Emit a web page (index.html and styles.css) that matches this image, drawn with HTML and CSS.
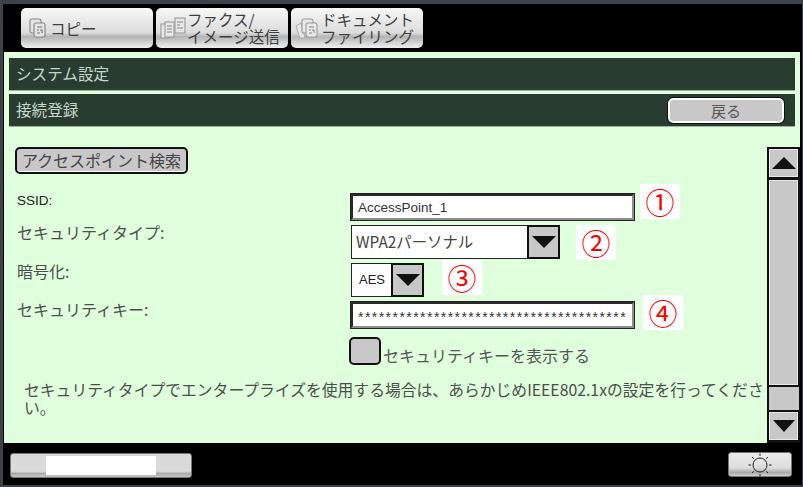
FILE: index.html
```html
<!DOCTYPE html>
<html lang="ja">
<head>
<meta charset="utf-8">
<title>接続登録</title>
<link rel="stylesheet" href="styles.css">
</head>
<body>
<div class="frame">
  <nav class="tabs">
    <div class="tab tab-copy">
      <svg class="tab-icon" viewBox="0 0 20 20"><g fill="#e4e4e4" stroke="#8a8a8a" stroke-width="1.2"><rect x="2" y="1" width="11" height="14" rx="2"/><rect x="6" y="5" width="11" height="14" rx="2"/></g><path d="M9 9h5M9 12h2M12 12h2v3M9 15h3" fill="none" stroke="#777" stroke-width="1.2"/></svg>
      <span class="tab-text">コピー</span>
    </div>
    <div class="tab tab-fax">
      <svg class="tab-icon wide" viewBox="0 0 26 22"><g fill="#e8e8e8" stroke="#999" stroke-width="1.1"><rect x="1" y="7" width="8" height="14"/><rect x="5" y="5" width="9" height="15"/><rect x="15" y="1" width="10" height="15"/></g><path d="M7 9h5M7 12h5M7 15h5M17 5h6M17 8h3M17 11h6" stroke="#888" fill="none"/></svg>
      <span class="tab-text two">ファクス/<br>イメージ送信</span>
    </div>
    <div class="tab">
      <svg class="tab-icon wide" viewBox="0 0 26 22"><path d="M1 9l5-3 4 15-5 0z" fill="#e8e8e8" stroke="#aaa"/><g fill="#e8e8e8" stroke="#999" stroke-width="1.1"><rect x="7" y="2" width="11" height="14" rx="2"/><rect x="11" y="6" width="11" height="14" rx="2"/></g><path d="M14 10h5M14 13h2M17 13h2v3M14 16h3" fill="none" stroke="#888"/></svg>
      <span class="tab-text two">ドキュメント<br>ファイリング</span>
    </div>
  </nav>
  <main class="panel">
    <header class="bars">
      <div class="bar"><span class="bar-title">システム設定</span></div>
      <div class="bar bar-sub"><span class="bar-title">接続登録</span><button class="back">戻る</button></div>
    </header>
    <div class="body">
      <section class="content">
        <button class="search">アクセスポイント検索</button>
        <div class="row row-ssid">
          <label class="label label-latin">SSID:</label>
          <div class="input"><span>AccessPoint_1</span></div>
          <span class="note note-1">①</span>
        </div>
        <div class="row row-type">
          <label class="label">セキュリティタイプ:</label>
          <div class="select select-type"><span class="value">WPA2パーソナル</span><span class="drop"><i class="arrow-down"></i></span></div>
          <span class="note note-2">②</span>
        </div>
        <div class="row row-enc">
          <label class="label">暗号化:</label>
          <div class="select select-enc"><span class="value value-small">AES</span><span class="drop"><i class="arrow-down"></i></span></div>
          <span class="note note-3">③</span>
        </div>
        <div class="row row-key">
          <label class="label">セキュリティキー:</label>
          <div class="input"><span class="stars">***************************************</span></div>
          <span class="note note-4">④</span>
        </div>
        <div class="row row-check">
          <span class="label"></span>
          <span class="checkbox"></span><span class="check-text">セキュリティキーを表示する</span>
        </div>
        <p class="hint">セキュリティタイプでエンタープライズを使用する場合は、あらかじめIEEE802.1xの設定を行ってくださ<br>い。</p>
      </section>
      <aside class="scroll">
        <div class="sbtn"><i class="arrow-up"></i></div>
        <div class="thumb"></div>
        <div class="track"></div>
        <div class="sbtn sbtn-down"><i class="arrow-down big"></i></div>
      </aside>
    </div>
  </main>
  <footer class="footer">
    <div class="status"><div class="status-window"></div></div>
    <div class="sun">
      <svg viewBox="0 0 24 24" width="24" height="24"><circle cx="12" cy="12" r="7" fill="none" stroke="#222" stroke-width="1"/><path d="M12 0.500v2.500M12 21v2.500M0.500 12h2.500M21 12h2.500M4 4l1.800 1.800M18.200 18.200l1.800 1.800M4 20l1.800-1.800M18.200 5.800l1.800-1.800" stroke="#222" stroke-width="1" fill="none"/></svg>
    </div>
  </footer>
</div>
</body>
</html>
```
FILE: styles.css
```css
* { box-sizing: border-box; }
html, body { margin: 0; height: 100%; }
body {
  width: 803px; height: 487px; overflow: hidden;
  background: #3c414b;
  padding: 4px 1px 2px 3px;
  font-family: "Noto Sans CJK JP", "Liberation Sans", sans-serif;
  color: #4a4f4b;
}
.frame { height: 481px; background: #000; display: flex; flex-direction: column; }

.tabs { height: 48px; padding: 4px 0 0 18px; display: flex; gap: 3px; flex: none; }
.tab {
  width: 132px; height: 40px; border-radius: 5px;
  background: linear-gradient(#f8f8f8 0, #ececec 25%, #dcdcdc 62%, #b4b4b4 72%, #f0f0f0 100%);
  display: flex; align-items: center; padding-left: 4px;
}
.tab-copy { padding-left: 7px; gap: 2px; }
.tab-fax { gap: 1px; }
.tab-icon { width: 20px; height: 20px; flex: none; }
.tab-icon.wide { width: 26px; height: 24px; }
.tab-text { font-size: 15.500px; color: #3f3f3f; line-height: 17px; }
.tab-text.two { white-space: nowrap; }

.panel { width: 796px; height: 391px; background: #e0ffdc; flex: none; margin-left: 1px; display: flex; flex-direction: column; }
.bars { padding: 6px 5px 0 5px; display: flex; flex-direction: column; gap: 3px; flex: none; }
.bar {
  height: 33px; background: #283d30; color: #c9d6cd; font-size: 15.600px;
  padding: 0 11px 0 7px; display: flex; align-items: center; justify-content: space-between;
  border-bottom: 1px solid #9fb0a4;
}
.bar-title { padding-bottom: 2px; }
.bar-sub .bar-title { padding-bottom: 3px; }
.back {
  width: 116px; height: 25px; background: #c8c8c8; border: 2px solid #fff; border-radius: 5px;
  outline: 1px solid #111; font: 15px "Noto Sans CJK JP", sans-serif; color: #555; padding: 0; line-height: 19px;
}

.body { flex: 1; display: flex; min-height: 0; }
.content { flex: 1; min-width: 0; overflow: hidden; padding: 20px 0 0 11px; }
.search {
  display: block; width: 173px; height: 27px; padding: 0; white-space: nowrap;
  background: #c8c8c8; border: 2px solid #111; border-radius: 5px; box-shadow: inset 0 -1px #fff;
  font: 16px/21px "Noto Sans CJK JP", sans-serif; color: #444;
}

.row { display: flex; align-items: center; }
.label { width: 335px; flex: none; font-size: 16px; line-height: 20px; padding-left: 2px; color: #4a4f4b; white-space: nowrap; }
.label-latin { font: 13.500px/20px "Liberation Sans", sans-serif; color: #222; }
.row-ssid { margin-top: 19px; height: 28px; }
.row-ssid .label { margin-top: -12px; }
.row-type { margin-top: 4px; height: 34px; }
.row-type .label { margin-top: -20px; }
.row-enc { margin-top: 4px; height: 34px; }
.row-enc .label { margin-top: -18px; }
.row-key { margin-top: 4px; height: 28px; }
.row-key .label { margin-top: -12px; }
.row-check { margin-top: 8px; height: 28px; }

.input {
  width: 285px; height: 28px; background: #fff;
  border: 3px solid; border-color: #2a2a2a #8e8e8e #8e8e8e #2a2a2a;
  outline: 1px solid #222; outline-offset: -1px;
  padding-left: 5px; display: flex; align-items: center;
  font: 13.500px "Liberation Sans", sans-serif; color: #333;
}
.stars { font: 14px "Liberation Sans", sans-serif; letter-spacing: 1.450px; white-space: nowrap; overflow: hidden; line-height: 22px; padding-top: 4px; }

.select { height: 34px; background: #fff; border: 1px solid #222; display: flex; margin-left: 1px; }
.select-type { width: 209px; }
.select-enc { width: 73px; }
.value { flex: 1; padding-left: 4px; font: 15.400px/31px "Noto Sans CJK JP", sans-serif; color: #444; white-space: nowrap; }
.value-small { padding-left: 7px; font: 13px/31px "Liberation Sans Narrow", "Liberation Sans", sans-serif; color: #222; }
.drop {
  width: 33px; background: #c8c8c8; border: 2px solid #111; margin: -1px -1px -1px 0;
  display: flex; align-items: center; justify-content: center;
}
.arrow-down, .arrow-up { display: block; width: 0; height: 0; border-left: 12px solid transparent; border-right: 12px solid transparent; }
.arrow-down { border-top: 12px solid #111; }
.arrow-up { border-bottom: 12px solid #111; }

.note {
  height: 35px; width: 40px; flex: none; background: #fff; color: #f00; font: 29px/35px "Noto Sans CJK JP", sans-serif;
  text-align: center; align-self: flex-start;
}
.note-1 { margin: -9px 0 0 5px; }
.note-2 { margin: 0 0 0 16px; }
.note-3 { margin: -3px 0 0 18px; }
.note-4 { margin: -6px 0 0 8px; }

.checkbox { width: 32px; height: 28px; background: #c8c8c8; border: 2px solid #111; border-radius: 5px; margin-left: -1px; flex: none; }
.check-text { font-size: 16px; color: #555; margin-left: 2px; margin-top: 8px; white-space: nowrap; }

.hint { margin: 16px 0 0 9px; font-size: 15.800px; line-height: 18px; color: #4a4f4b; white-space: nowrap; }

.scroll { width: 33px; background: #111; flex: none; margin-top: 20px; padding: 2px; display: flex; flex-direction: column; gap: 3px; }
.sbtn { height: 28px; background: #c8c8c8; border: 1px solid #e8e8e8; display: flex; align-items: center; justify-content: center; flex: none; }
.big { border-left-width: 11px; border-right-width: 11px; }
.thumb { height: 205px; background: #c8c8c8; border: 1px solid #e8e8e8; flex: none; }
.track { height: 23px; background: #c8c8c8; margin: -1px -1px -1px 0; flex: none; }

.footer { flex: 1; display: flex; justify-content: space-between; align-items: center; padding: 1px 10px 0 7px; }
.status {
  width: 182px; height: 25px; margin-top: 1px; border-radius: 3px; border: 1px solid #777;
  background: linear-gradient(#dadada 0, #dadada 75%, #aaa 85%, #c8c8c8 100%);
  display: flex; justify-content: center; padding: 2px 0;
}
.status-window { width: 110px; background: #fff; }
.sun {
  width: 64px; height: 25px; border-radius: 3px; border: 1px solid #777;
  background: linear-gradient(#ececec 0, #dcdcdc 65%, #aaa 85%, #d0d0d0 100%);
  display: flex; align-items: center; justify-content: center;
}
```
